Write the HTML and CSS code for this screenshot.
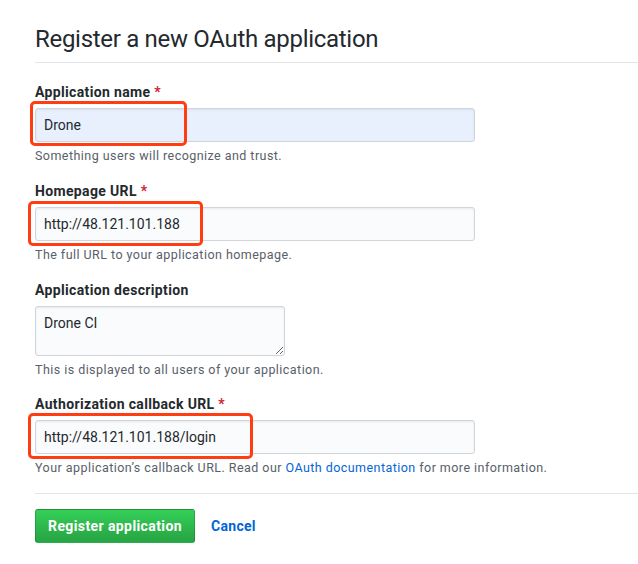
FILE: index.html
```html
<!DOCTYPE html>
<html>
<head>
<meta charset="utf-8">
<link rel="stylesheet" href="styles.css">
</head>
<body>
<div class="page">
  <h1 class="title">Register a new OAuth application</h1>
  <form class="form">
    <div class="group">
      <label class="label">Application name <span class="req">*</span></label>
      <div class="field">
        <input class="input autofill" type="text" value="Drone">
        <span class="mark mark-1"></span>
      </div>
      <p class="note">Something users will recognize and trust.</p>
    </div>
    <div class="group">
      <label class="label">Homepage URL <span class="req">*</span></label>
      <div class="field">
        <input class="input" type="text" value="http://48.121.101.188">
        <span class="mark mark-2"></span>
      </div>
      <p class="note">The full URL to your application homepage.</p>
    </div>
    <div class="group">
      <label class="label">Application description</label>
      <div class="field">
        <textarea class="textarea">Drone CI</textarea>
      </div>
      <p class="note">This is displayed to all users of your application.</p>
    </div>
    <div class="group group-last">
      <label class="label">Authorization callback URL <span class="req">*</span></label>
      <div class="field">
        <input class="input" type="text" value="http://48.121.101.188/login">
        <span class="mark mark-3"></span>
      </div>
      <p class="note">Your application’s callback URL. Read our <a class="link" href="#">OAuth documentation</a> for more information.</p>
    </div>
    <div class="actions">
      <button class="btn" type="button">Register application</button>
      <a class="cancel" href="#">Cancel</a>
    </div>
  </form>
</div>
</body>
</html>
```
FILE: styles.css
```css
html, body {
  margin: 0;
  padding: 0;
  background: #fff;
}
body {
  font-family: Roboto, "Liberation Sans", sans-serif;
  color: #24292e;
  font-size: 14px;
}
.page {
  padding: 24px 0 0 35px;
}
.title {
  margin: 0;
  font-size: 24px;
  font-weight: 400;
  line-height: 30px;
  letter-spacing: -0.3px;
  padding-bottom: 8px;
  border-bottom: 1px solid #e1e4e8;
}
.form {
  padding-top: 19px;
}
.group {
  margin-bottom: 16px;
}
.group-last {
  margin-top: -1px;
}
.label {
  display: block;
  font-weight: 700;
  font-size: 14px;
  line-height: 20px;
  letter-spacing: 0.35px;
  margin-bottom: 6px;
}
.req {
  color: #cb2431;
}
.field {
  position: relative;
  width: 440px;
}
.input, .textarea {
  box-sizing: border-box;
  display: block;
  font-family: inherit;
  font-size: 14px;
  color: #24292e;
  background: #fafbfc;
  border: 1px solid #d1d5da;
  border-radius: 3px;
  box-shadow: inset 0 1px 2px rgba(27,31,35,0.075);
  padding: 6px 8px;
  line-height: 20px;
  outline: none;
  margin: 0;
}
.input {
  width: 440px;
  height: 34px;
}
.input.autofill {
  background: #e8f0fe;
}
.textarea {
  width: 250px;
  height: 50px;
  resize: vertical;
  padding-top: 6px;
}
.note {
  margin: 5px 0 0;
  font-size: 12.5px;
  line-height: 18px;
  color: #586069;
  letter-spacing: 0.45px;
}
.link {
  color: #0366d6;
  text-decoration: none;
}
.mark {
  position: absolute;
  box-sizing: border-box;
  border: 3px solid #ff3c12;
  border-radius: 5px;
  pointer-events: none;
}
.mark-1 { left: -5px; top: -7px; width: 157px; height: 45px; }
.mark-2 { left: -7px; top: -6px; width: 175px; height: 45px; }
.mark-3 { left: -7px; top: -7px; width: 225px; height: 46px; }
.actions {
  margin-top: 10px;
  border-top: 1px solid #e1e4e8;
  padding-top: 15px;
  display: flex;
  align-items: center;
  gap: 16px;
}
.btn {
  box-sizing: border-box;
  height: 34px;
  width: 160px;
  white-space: nowrap;
  font-family: inherit;
  font-size: 14px;
  font-weight: 700;
  letter-spacing: 0.4px;
  color: #fff;
  background: linear-gradient(-180deg, #34d058 0%, #28a745 90%);
  border: 1px solid rgba(27,31,35,0.2);
  border-radius: 3px;
  padding: 0 6px;
}
.cancel {
  color: #0366d6;
  font-weight: 700;
  letter-spacing: 0.3px;
  text-decoration: none;
}
```
